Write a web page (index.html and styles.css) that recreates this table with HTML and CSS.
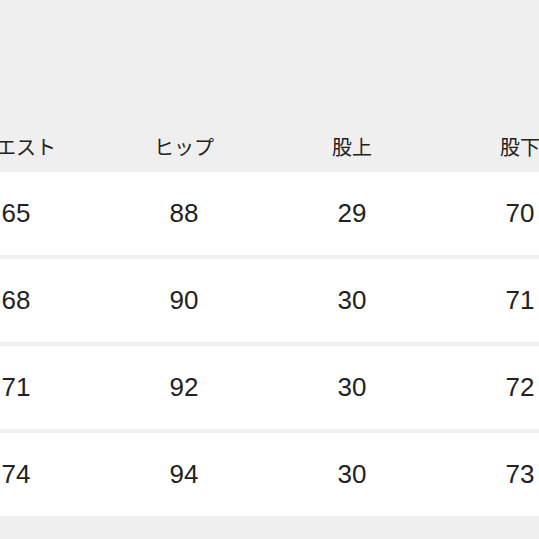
FILE: index.html
```html
<!DOCTYPE html>
<html lang="ja">
<head>
<meta charset="utf-8">
<link rel="stylesheet" href="styles.css">
</head>
<body>
<div class="sheet">
  <div class="head">
    <div class="cell">ウエスト</div>
    <div class="cell">ヒップ</div>
    <div class="cell">股上</div>
    <div class="cell">股下</div>
  </div>
  <div class="rows">
    <div class="row"><div class="cell">65</div><div class="cell">88</div><div class="cell">29</div><div class="cell">70</div></div>
    <div class="row"><div class="cell">68</div><div class="cell">90</div><div class="cell">30</div><div class="cell">71</div></div>
    <div class="row"><div class="cell">71</div><div class="cell">92</div><div class="cell">30</div><div class="cell">72</div></div>
    <div class="row"><div class="cell">74</div><div class="cell">94</div><div class="cell">30</div><div class="cell">73</div></div>
  </div>
</div>
</body>
</html>
```
FILE: styles.css
```css
html, body {
  margin: 0;
  padding: 0;
  background: #efefef;
  overflow: hidden;
  width: 539px;
  height: 539px;
}
.sheet {
  margin-left: -68px;
  width: 672px;
  color: #222;
}
.head {
  display: grid;
  grid-template-columns: repeat(4, 168px);
  height: 172px;
  align-items: end;
  box-sizing: border-box;
  padding-bottom: 10px;
  font-family: "Noto Sans CJK JP", sans-serif;
  font-size: 20px;
  line-height: 30px;
}
.rows {
  display: flex;
  flex-direction: column;
  gap: 4px;
}
.row {
  display: grid;
  grid-template-columns: repeat(4, 168px);
  height: 83px;
  align-items: center;
  background: #fff;
  font-family: "Liberation Sans", Arial, sans-serif;
  font-size: 26px;
}
.cell {
  text-align: center;
}
```
